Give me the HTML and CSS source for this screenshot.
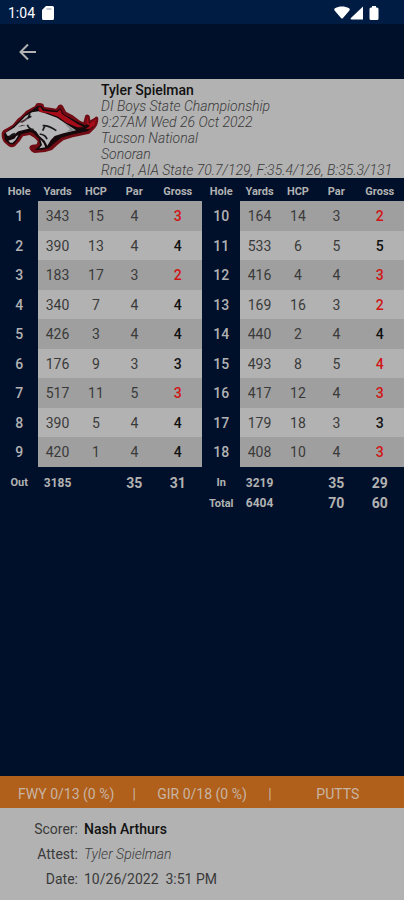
FILE: index.html
```html
<!DOCTYPE html>
<html lang="en">
<head>
    <meta charset="utf-8">
    <meta name="viewport" content="width=device-width, initial-scale=1">
    <title>Scorecard</title>
    <link rel="stylesheet" href="styles.css">
</head>
<body>
    <div class="status-bar">
        <span class="time">1:04</span>
        <svg class="sd-icon" viewBox="0 0 12 14" width="12" height="14"><path d="M4 0h6.500a1.500 1.500 0 0 1 1.500 1.500v11a1.500 1.500 0 0 1-1.500 1.500h-9a1.500 1.500 0 0 1-1.500-1.500V4z"/><path class="sd-slot" d="M4.500 3h5" /></svg>
        <div class="status-icons">
            <svg viewBox="0 0 16 14" width="16" height="14"><path d="M1 5C0 4 0 3 1 2.300C5 0 11 0 15 2.300c1 .7 1 1.700 0 2.700L9 12c-.6.7-1.400.7-2 0z"/></svg>
            <svg viewBox="0 0 14 14" width="14" height="14"><path d="M13 .5v13H1.500c-1 0-1.300-.8-.6-1.500z"/></svg>
            <svg class="battery" viewBox="0 0 10 14" width="10" height="14"><path d="M3 0h4v1.500h1A1.500 1.500 0 0 1 9.500 3v9.500A1.500 1.500 0 0 1 8 14H2A1.500 1.500 0 0 1 .5 12.500V3A1.500 1.500 0 0 1 2 1.500h1z"/></svg>
        </div>
    </div>

    <header class="app-bar">
        <button class="back" type="button" aria-label="Back">
            <svg viewBox="0 0 18 18" width="18" height="18"><path d="M17 9H2M9 1.500L1.500 9L9 16.500"/></svg>
        </button>
    </header>

    <section class="player">
        <svg class="logo" viewBox="0 9 300 297" aria-hidden="true">
            <path class="logo-red" d="M5 172Q7 162 21 157L38 146L53 128L63 121L78 105L104 91L110 82Q120 79 130 84L133 93L151 95L168 98L176 87Q184 83 189 90L198 107L218 118L240 134L250 139L256 118Q264 112 269 120L271 133L283 126Q292 117 295 127Q295 148 282 160L268 173L247 178L218 184L190 193L173 206L156 222L136 228L104 231Q92 228 88 216Q88 208 97 206L110 205L113 196L104 186L89 177L69 181L59 196L45 211Q34 217 25 210L12 199Q4 188 5 172Z"/>
            <path class="logo-black" d="M12 173L38 153L58 134L75 116L97 101L113 90L125 91L132 100L170 104L182 97L190 114L232 137L258 149L263 130L271 143L287 134L279 153L262 166L214 176L184 185L164 201L147 216L128 221L104 222L120 208L117 188L99 171L91 168L64 175L54 190L42 205L29 205L15 193Z"/>
            <path class="logo-white" d="M17 170L42 155L60 138L76 121L96 109L116 106L135 112L171 125L198 143L228 163L190 172L164 180L152 193L142 209L134 194L118 180L108 166L91 157L80 160L55 166L42 176L23 180Z"/>
            <path class="logo-white" d="M25 194L43 188L49 180L55 178L47 191L38 200L31 200Z"/>
            <path class="logo-white" d="M121 190L131 202L136 214L118 217L126 207Z"/>
            <path class="logo-bright" d="M114 95L121 93L129 104L151 107L172 109L181 100L186 114L205 126L229 142L251 154L232 154L215 147L199 140L174 122L145 112L119 108Z"/>
            <path class="logo-bright" d="M262 122L268 143L288 130L284 147L270 158L256 159L270 149L259 144Z"/>
            <path class="logo-gray" d="M190 139L224 163L199 168L210 160Z"/>
            <path class="logo-eye" d="M58 139L74 130L82 123L79 133L67 140ZM53 153L66 147L78 147L64 151Z"/>
            <path class="logo-line" d="M28 183Q36 174 45 173M82 146Q86 159 101 161M90 112L84 126L94 121M119 174Q137 176 141 190M128 149Q147 148 169 164M134 151L128 164"/>
        </svg>
        <div class="player-info">
            <h1>Tyler Spielman</h1>
            <p>DI Boys State Championship</p>
            <p>9:27AM Wed 26 Oct 2022</p>
            <p>Tucson National</p>
            <p>Sonoran</p>
            <p>Rnd1, AIA State 70.7/129, F:35.4/126, B:35.3/131</p>
        </div>
    </section>

    <main class="scorecard">
        <table class="nine">
            <thead>
                <tr><th class="hole">Hole</th><th>Yards</th><th>HCP</th><th>Par</th><th class="gross">Gross</th></tr>
            </thead>
            <tbody>
                <tr><th>1</th><td>343</td><td>15</td><td>4</td><td class="under">3</td></tr>
                <tr><th>2</th><td>390</td><td>13</td><td>4</td><td>4</td></tr>
                <tr><th>3</th><td>183</td><td>17</td><td>3</td><td class="under">2</td></tr>
                <tr><th>4</th><td>340</td><td>7</td><td>4</td><td>4</td></tr>
                <tr><th>5</th><td>426</td><td>3</td><td>4</td><td>4</td></tr>
                <tr><th>6</th><td>176</td><td>9</td><td>3</td><td>3</td></tr>
                <tr><th>7</th><td>517</td><td>11</td><td>5</td><td class="under">3</td></tr>
                <tr><th>8</th><td>390</td><td>5</td><td>4</td><td>4</td></tr>
                <tr><th>9</th><td>420</td><td>1</td><td>4</td><td>4</td></tr>
            </tbody>
            <tfoot>
                <tr><th>Out</th><td class="yards">3185</td><td></td><td>35</td><td>31</td></tr>
            </tfoot>
        </table>
        <table class="nine">
            <thead>
                <tr><th class="hole">Hole</th><th>Yards</th><th>HCP</th><th>Par</th><th class="gross">Gross</th></tr>
            </thead>
            <tbody>
                <tr><th>10</th><td>164</td><td>14</td><td>3</td><td class="under">2</td></tr>
                <tr><th>11</th><td>533</td><td>6</td><td>5</td><td>5</td></tr>
                <tr><th>12</th><td>416</td><td>4</td><td>4</td><td class="under">3</td></tr>
                <tr><th>13</th><td>169</td><td>16</td><td>3</td><td class="under">2</td></tr>
                <tr><th>14</th><td>440</td><td>2</td><td>4</td><td>4</td></tr>
                <tr><th>15</th><td>493</td><td>8</td><td>5</td><td class="under">4</td></tr>
                <tr><th>16</th><td>417</td><td>12</td><td>4</td><td class="under">3</td></tr>
                <tr><th>17</th><td>179</td><td>18</td><td>3</td><td>3</td></tr>
                <tr><th>18</th><td>408</td><td>10</td><td>4</td><td class="under">3</td></tr>
            </tbody>
            <tfoot>
                <tr><th>In</th><td class="yards">3219</td><td></td><td>35</td><td>29</td></tr>
                <tr><th>Total</th><td class="yards">6404</td><td></td><td>70</td><td>60</td></tr>
            </tfoot>
        </table>
    </main>

    <div class="stats">
        <span class="stat">FWY 0/13 (0 %)</span>
        <span>|</span>
        <span class="stat">GIR 0/18 (0 %)</span>
        <span>|</span>
        <span class="stat">PUTTS</span>
    </div>

    <dl class="signoff">
        <dt>Scorer:</dt>
        <dd class="scorer">Nash Arthurs</dd>
        <dt>Attest:</dt>
        <dd class="attest">Tyler Spielman</dd>
        <dt>Date:</dt>
        <dd>10/26/2022&nbsp; 3:51 PM</dd>
    </dl>
</body>
</html>
```

FILE: styles.css
```css
* {
    box-sizing: border-box;
}

body {
    display: flex;
    flex-direction: column;
    min-height: 100vh;
    margin: 0;
    background-color: #00102b;
    color: #3a3a3a;
    font-family: Roboto, Arial, sans-serif;
    font-size: 14px;
}

/* top bars */
.status-bar {
    display: flex;
    align-items: center;
    height: 24px;
    padding: 2px 25px 0 8px;
    background-color: #001c43;
    color: #fff;
}

.status-bar svg {
    display: block;
    fill: #fff;
}

.time {
    margin-right: 7px;
}

.status-bar .sd-slot {
    fill: none;
    stroke: #8890a0;
}

.status-icons {
    display: flex;
    margin-left: auto;
}

.battery {
    margin-left: 5px;
}

.app-bar {
    display: flex;
    align-items: center;
    height: 55px;
    padding-left: 11px;
}

.back {
    display: flex;
    padding: 8px;
    border: 0;
    background: none;
    cursor: pointer;
}

.back svg {
    fill: none;
    stroke: #b2b2b2;
    stroke-width: 2;
}

/* player */
.player {
    display: flex;
    background-color: #b2b2b2;
}

.logo {
    flex: none;
    width: 100px;
    height: 99px;
}

.logo-red {
    fill: #710c15;
}

.logo-black {
    fill: #16090c;
}

.logo-white {
    fill: #b6b6b8;
}

.logo-bright {
    fill: #a60d18;
}

.logo-gray {
    fill: #858789;
}

.logo-eye {
    fill: #4a3038;
}

.logo-line {
    fill: none;
    stroke: #17171c;
    stroke-width: 5;
}

.player-info {
    padding: 3px 0 0 1px;
    font-style: italic;
    font-weight: 300;
    line-height: 16px;
    white-space: nowrap;
}

.player-info h1,
.player-info p {
    margin: 0;
}

.player-info h1 {
    color: #111;
    font-size: 14px;
    font-style: normal;
    font-weight: 500;
}

/* scorecard */
.scorecard {
    display: flex;
    flex: 1;
    align-items: flex-start;
}

.nine {
    flex: 1;
    width: 50%;
    table-layout: fixed;
    border-collapse: collapse;
    text-align: center;
}

.nine th,
.nine td {
    padding: 0;
}

.nine .hole {
    width: 19%;
}

.nine .gross {
    width: 24%;
}

.nine thead th {
    height: 23px;
    padding-top: 3px;
    color: #b2b2b2;
    font-size: 11px;
    font-weight: 700;
}

.nine tbody tr {
    height: 30px;
}

.nine tbody tr:nth-child(even) {
    height: 29px;
}

.nine tbody th {
    color: #b2b2b2;
    font-weight: 500;
}

.nine tbody td {
    background-color: #9f9f9f;
}

.nine tbody tr:nth-child(even) td {
    background-color: #b2b2b2;
}

.nine tbody td:last-child {
    color: #111;
    font-weight: 500;
}

.nine tbody td.under {
    color: #d01414;
}

.nine tfoot {
    color: #b2b2b2;
    font-weight: 700;
}

.nine tfoot tr {
    height: 20px;
}

.nine tfoot tr:first-child {
    height: 26px;
}

.nine tfoot tr:first-child > * {
    padding-top: 5px;
}

.nine tfoot th {
    font-size: 11px;
}

.nine tfoot .yards {
    font-size: 12px;
}

/* footer */
.stats {
    display: flex;
    align-items: center;
    height: 32px;
    padding-top: 3px;
    background-color: #b0601b;
    color: #c8b4a4;
}

.stat {
    flex: 1;
    text-align: center;
}

.signoff {
    display: grid;
    grid-template-columns: 78px 1fr;
    column-gap: 6px;
    margin: 0;
    padding: 9px 0 8px;
    background-color: #b2b2b2;
    line-height: 25px;
}

.signoff dt {
    text-align: right;
}

.signoff dd {
    margin: 0;
}

.signoff .scorer {
    color: #111;
    font-weight: 500;
}

.signoff .attest {
    font-style: italic;
    font-weight: 300;
}
```
